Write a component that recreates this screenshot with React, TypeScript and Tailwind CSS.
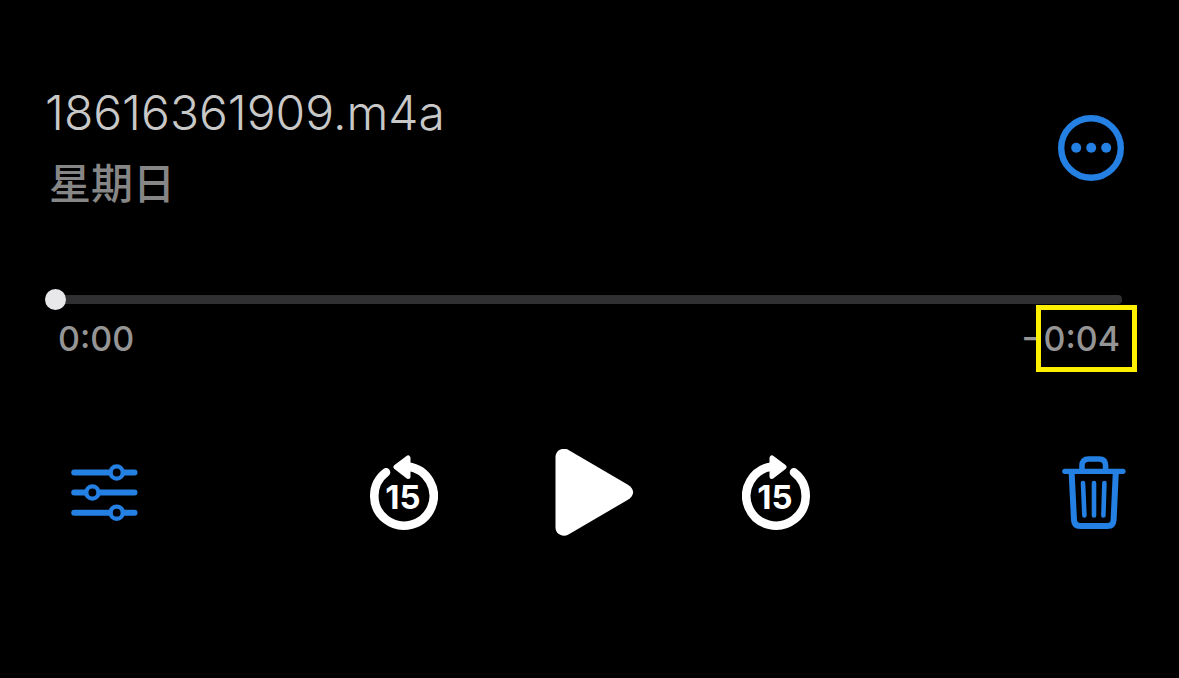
import { useState } from "react";

type SkipIconProps = {
  direction: "back" | "forward";
};

function MoreIcon() {
  return (
    <svg className="h-[66px] w-[66px]" viewBox="0 0 66 66" fill="none" aria-hidden>
      <circle cx="33" cy="33" r="29.8" stroke="currentColor" strokeWidth="6.4" />
      <circle cx="18.2" cy="32.8" r="5" fill="currentColor" />
      <circle cx="33.2" cy="32.8" r="5" fill="currentColor" />
      <circle cx="48.2" cy="32.8" r="5" fill="currentColor" />
    </svg>
  );
}

function OptionsIcon() {
  return (
    <svg className="h-[58px] w-[68px]" viewBox="0 0 68 58" fill="none" stroke="currentColor" aria-hidden>
      <path d="M3.2 8.5H63.5M3.2 28.5H63.5M3.2 48.7H63.5" strokeWidth="6" strokeLinecap="round" />
      <g fill="#000" strokeWidth="4.4">
        <circle cx="45.7" cy="8.5" r="6.1" />
        <circle cx="21.4" cy="28.5" r="6.1" />
        <circle cx="45.7" cy="48.7" r="6.1" />
      </g>
    </svg>
  );
}

function SkipIcon({ direction }: SkipIconProps) {
  return (
    <svg className="h-[76px] w-[68px]" viewBox="0 0 68 76" fill="none" aria-hidden>
      <g transform={direction === "forward" ? "matrix(-1 0 0 1 68 0)" : undefined}>
        <path
          d="M16 17.3A29.7 29.7 0 1 0 38 11.5"
          stroke="#fff"
          strokeWidth="8.6"
          strokeLinecap="round"
        />
        <path
          d="M26 12L38 3V21.4Z"
          fill="#fff"
          stroke="#fff"
          strokeWidth="5"
          strokeLinejoin="round"
        />
      </g>
      <text
        className="font-[Inter,sans-serif] text-[33px] font-bold"
        x="33"
        y="54"
        textAnchor="middle"
        fill="#fff"
      >
        15
      </text>
    </svg>
  );
}

function PlayIcon() {
  return (
    <svg className="h-[88px] w-[88px]" viewBox="0 0 88 88" aria-hidden>
      <path
        d="M9.5 8C9.5 1.5 16.5 -2.3 22.5 0.9L81.5 35.5C89 40 89 46.5 81.5 51L22.5 85.5C16.5 88.7 9.5 85 9.5 78.5Z"
        fill="#fff"
      />
    </svg>
  );
}

function TrashIcon() {
  return (
    <svg
      className="h-[74px] w-[64px]"
      viewBox="0 0 64 74"
      fill="none"
      stroke="currentColor"
      strokeLinecap="round"
      aria-hidden
    >
      <path d="M2.8 15.3H61" strokeWidth="5.2" />
      <path d="M20 14.5V9.5Q20 3 26.5 3H37Q43.6 3 43.6 9.5V14.5" strokeWidth="5.6" />
      <path d="M9.6 16L12 64Q12.4 70 18 70H45.5Q51.2 70 51.6 64L53.8 16" strokeWidth="6" />
      <path d="M21 27L22.4 59.4M32 27V59.4M42.4 27L41.4 59.4" strokeWidth="4.6" />
    </svg>
  );
}

export default function App() {
  const [position, setPosition] = useState(0);

  return (
    <main className="min-h-screen bg-black px-[45px] pt-20 font-[Inter,'Noto_Sans_CJK_SC',sans-serif]">
      <header className="flex items-center justify-between pr-[10px]">
        <div>
          <h1 className="text-[48px] leading-[66px] font-[350] text-[#c8c8c8]">18616361909.m4a</h1>
          <p className="pl-1 font-['Noto_Sans_CJK_SC',sans-serif] text-[42px] leading-[70px] font-medium text-[#868686]">
            星期日
          </p>
        </div>
        <button type="button" className="text-[#2480e2]" aria-label="更多">
          <MoreIcon />
        </button>
      </header>

      <section className="mt-[72px] pr-3">
        <input
          type="range"
          min={0}
          max={4}
          step={1}
          value={position}
          onChange={(event) => setPosition(Number(event.target.value))}
          aria-label="播放进度"
          className="block h-[22px] w-full appearance-none bg-transparent [&::-webkit-slider-runnable-track]:h-[9px] [&::-webkit-slider-runnable-track]:rounded-sm [&::-webkit-slider-runnable-track]:bg-[#303032] [&::-webkit-slider-thumb]:-mt-[6px] [&::-webkit-slider-thumb]:h-[21px] [&::-webkit-slider-thumb]:w-[21px] [&::-webkit-slider-thumb]:appearance-none [&::-webkit-slider-thumb]:rounded-full [&::-webkit-slider-thumb]:bg-[#e8e8ea]"
        />
        <div className="mt-[9px] flex justify-between pr-[2px] pl-[13px] text-[34px] leading-10 font-medium text-[#959595]">
          <span>0:00</span>
          <span>
            −
            <span className="relative">
              0:04
              <span className="absolute -top-[13px] -right-[17px] -bottom-[13px] -left-[7px] border-[5px] border-[#fff000]" />
            </span>
          </span>
        </div>
      </section>

      <nav className="mt-[90px] grid grid-cols-[1fr_auto_1fr] items-center">
        <button type="button" className="ml-[26px] justify-self-start text-[#2480e2]" aria-label="选项">
          <OptionsIcon />
        </button>
        <div className="flex items-center gap-[108px]">
          <button type="button" aria-label="后退15秒">
            <SkipIcon direction="back" />
          </button>
          <button type="button" aria-label="播放">
            <PlayIcon />
          </button>
          <button type="button" aria-label="前进15秒">
            <SkipIcon direction="forward" />
          </button>
        </div>
        <button type="button" className="mr-2 justify-self-end text-[#2480e2]" aria-label="删除">
          <TrashIcon />
        </button>
      </nav>
    </main>
  );
}
